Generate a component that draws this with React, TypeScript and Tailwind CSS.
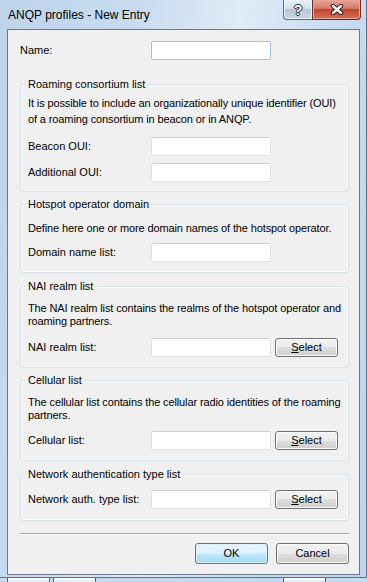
import React from 'react';

const TextBox = ({ focused }: { focused?: boolean }) => (
  <div
    className={
      focused
        ? 'w-[120px] h-[19px] shrink-0 bg-white rounded-[2px] border border-[#9ec3e8]'
        : 'w-[120px] h-[19px] shrink-0 bg-white rounded-[2px] border border-[#dfe3e8] border-t-[#cdd1d6]'
    }
  />
);

const SelectButton = () => (
  <button className="ml-[4px] w-[63px] h-[19px] shrink-0 rounded-[3px] border border-[#707070] bg-[linear-gradient(#f2f2f2,#ebebeb_50%,#dddddd_50%,#cfcfcf)] shadow-[inset_0_0_0_1px_#fbfbfb] text-[11px] leading-[17px] text-black">
    <span className="underline underline-offset-[1px]">S</span>elect
  </button>
);

const Row = ({ label, select }: { label: string; select?: boolean }) => (
  <div className="flex items-center h-[19px]">
    <div className="w-[123px] shrink-0 text-[11px] leading-[13px]">{label}</div>
    <TextBox />
    {select && <SelectButton />}
  </div>
);

const Group = ({ title, className, children }: { title: string; className: string; children: React.ReactNode }) => (
  <fieldset className={`w-[329px] border border-[#d5dfe5] rounded-[3px] pl-[7px] shadow-[inset_0_0_0_1px_#fafbfc] ${className}`}>
    <legend className="-ml-[2px] px-[2px] text-[11px] leading-[14px]">{title}</legend>
    {children}
  </fieldset>
);

const App: React.FC = () => {
  return (
    <div className="w-[367px] h-[582px] overflow-hidden bg-[#cadcef] font-['Liberation_Sans',Arial,sans-serif] text-black">
      <div className="w-[367px] h-[578px] flex flex-col border-r border-b border-[#5d7088] bg-[linear-gradient(100deg,#bed4ec_0%,#c8dbf0_30%,#e0ebf7_52%,#c9dcf0_72%,#bfd4ec_100%)]">
        {/* title bar */}
        <div className="h-[29px] flex items-start shrink-0">
          <div className="pl-[8px] pt-[7px] text-[12px] leading-[16px]">ANQP profiles - New Entry</div>
          <div className="ml-auto mr-[5px] flex">
            <div className="w-[29px] h-[20px] flex items-center justify-center rounded-bl-[4px] border border-t-0 border-r-0 border-[#5f6d7e] bg-[linear-gradient(#e7eef6,#d3dde9_50%,#b9c6d6_50%,#cbd6e2)] shadow-[inset_0_0_0_1px_#eef3f8]">
              <span className="text-[14px] leading-[14px] font-bold text-white [text-shadow:0_0_1px_#22303f,1px_0_0_#22303f,-1px_0_0_#22303f,0_1px_0_#22303f,0_-1px_0_#22303f]">?</span>
            </div>
            <div className="w-[49px] h-[20px] flex items-center justify-center rounded-br-[4px] border border-t-0 border-[#6a2b22] bg-[linear-gradient(#e6a699,#d77463_50%,#c2452f_50%,#d4725c)] shadow-[inset_0_0_0_1px_#e9a497]">
              <svg width="14" height="11" viewBox="0 0 14 11">
                <path d="M3 2 L11 9 M11 2 L3 9" stroke="#3a1712" strokeWidth="4.4" strokeLinecap="round" />
                <path d="M3 2 L11 9 M11 2 L3 9" stroke="#ffffff" strokeWidth="2.4" strokeLinecap="round" />
              </svg>
            </div>
          </div>
        </div>

        {/* client area */}
        <div className="ml-[7px] w-[353px] h-[546px] border border-[#6b7889] bg-[#f0f0f0] pl-[12px] text-[11px]">
          <div className="mt-[11px] flex items-center h-[19px]">
            <div className="w-[131px] shrink-0 leading-[13px]">Name:</div>
            <TextBox focused />
          </div>

          <Group title="Roaming consortium list" className="mt-[17px] pb-[9px]">
            <div className="mt-[4px] leading-[16px] whitespace-nowrap tracking-[-0.12px]">
              <div>It is possible to include an organizationally unique identifier (OUI)</div>
              <div>of a roaming consortium in beacon or in ANQP.</div>
            </div>
            <div className="mt-[10px] flex flex-col gap-[7px]">
              <Row label="Beacon OUI:" />
              <Row label="Additional OUI:" />
            </div>
          </Group>

          <Group title="Hotspot operator domain" className="mt-[5px] pb-[10px]">
            <div className="mt-[11px] leading-[13px] whitespace-nowrap tracking-[-0.12px]">Define here one or more domain names of the hotspot operator.</div>
            <div className="mt-[8px]">
              <Row label="Domain name list:" />
            </div>
          </Group>

          <Group title="NAI realm list" className="mt-[6px] pb-[10px]">
            <div className="mt-[9px] leading-[13px] whitespace-nowrap tracking-[-0.12px]">
              <div>The NAI realm list contains the realms of the hotspot operator and</div>
              <div>roaming partners.</div>
            </div>
            <div className="mt-[10px]">
              <Row label="NAI realm list:" select />
            </div>
          </Group>

          <Group title="Cellular list" className="mt-[5px] pb-[10px]">
            <div className="mt-[9px] leading-[13px] whitespace-nowrap tracking-[-0.12px]">
              <div>The cellular list contains the cellular radio identities of the roaming</div>
              <div>partners.</div>
            </div>
            <div className="mt-[9px]">
              <Row label="Cellular list:" select />
            </div>
          </Group>

          <Group title="Network authentication type list" className="mt-[6px] pb-[11px]">
            <div className="mt-[9px]">
              <Row label="Network auth. type list:" select />
            </div>
          </Group>

          <div className="mt-[12px] w-[329px] h-[2px] border-t border-[#a0a0a0] border-b border-b-white" />

          <div className="mt-[8px] w-[329px] flex justify-end gap-[8px]">
            <button className="w-[73px] h-[21px] rounded-[3px] border border-[#3c7fb1] bg-[linear-gradient(#eaf6fd,#d9f0fc_50%,#bee6fd_50%,#a7d9f5)] shadow-[inset_0_0_0_1px_#dff1fb] text-[11px] leading-[19px]">
              OK
            </button>
            <button className="w-[73px] h-[21px] rounded-[3px] border border-[#707070] bg-[linear-gradient(#f2f2f2,#ebebeb_50%,#dddddd_50%,#cfcfcf)] shadow-[inset_0_0_0_1px_#fbfbfb] text-[11px] leading-[19px]">
              Cancel
            </button>
          </div>
        </div>
      </div>

      {/* windows behind */}
      <div className="h-[4px] flex bg-[#c6daef]">
        <div className="ml-[7px] w-[43px] border-l border-r border-[#4d5f74] bg-[linear-gradient(#ffffff,#dbe8f5)]" />
        <div className="ml-[3px] w-[43px] border-l border-r border-[#4d5f74] bg-[linear-gradient(#ffffff,#dbe8f5)]" />
        <div className="ml-[187px] w-[43px] border-l border-r border-[#4d5f74] bg-[linear-gradient(#ffffff,#dbe8f5)]" />
      </div>
    </div>
  );
};

export default App;
